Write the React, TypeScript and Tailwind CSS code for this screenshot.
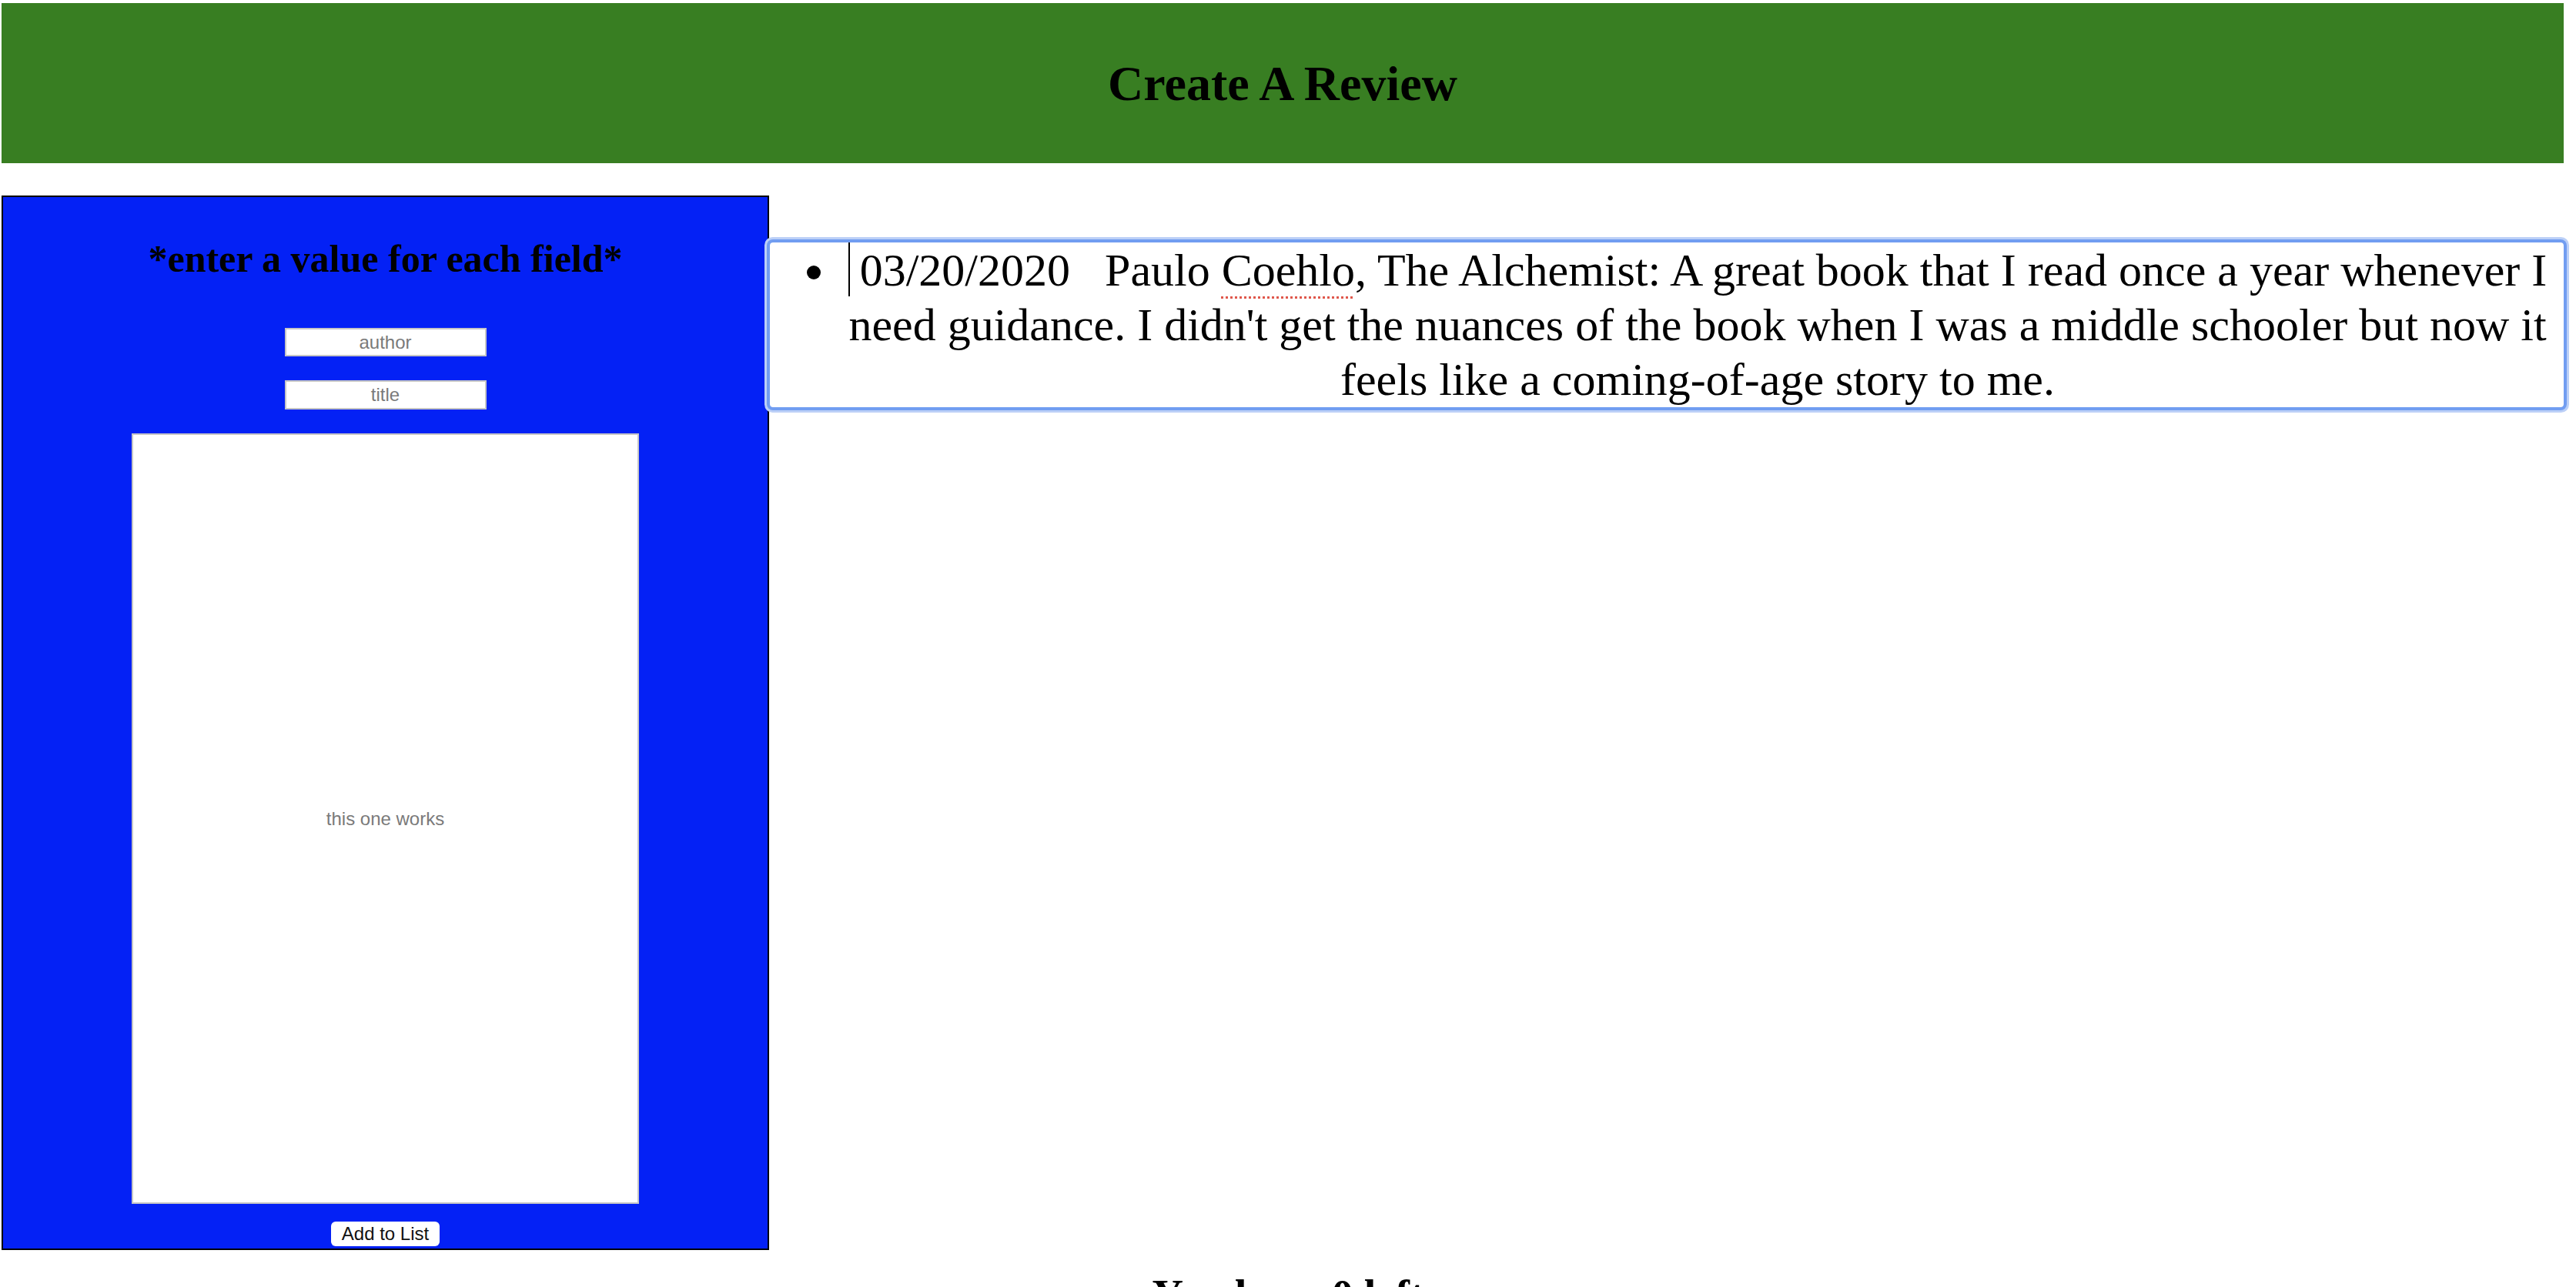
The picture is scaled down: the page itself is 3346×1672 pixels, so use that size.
import React from 'react';

const serif = "font-['Liberation_Serif','Times_New_Roman',serif]";
const sans = "font-['Liberation_Sans',Arial,sans-serif]";

const App = () => {
  return (
    <div className={`min-h-screen bg-white text-black ${serif}`}>
      <header className="ml-[2px] mt-[4px] w-[3328px] h-[208px] bg-[#387e22] flex items-center justify-center">
        <h1 className="text-[64px] leading-[71px] font-bold">Create A Review</h1>
      </header>

      <div className="ml-[2px] w-[3328px] mt-[42px] flex items-start">
        <form
          onSubmit={(e) => e.preventDefault()}
          className="w-[997px] h-[1370px] shrink-0 border-2 border-black bg-[#0421f5] flex flex-col items-center"
        >
          <h2 className="mt-[54px] text-[50px] leading-[53px] font-bold">*enter a value for each field*</h2>
          <input
            placeholder="author"
            className={`mt-[63px] w-[262px] h-[37px] bg-white border-2 border-[#c6c6c6] text-center text-[24px] placeholder:text-[#7a7a7a] ${sans}`}
          />
          <input
            placeholder="title"
            className={`mt-[31px] w-[262px] h-[38px] bg-white border-2 border-[#c6c6c6] text-center text-[24px] placeholder:text-[#7a7a7a] ${sans}`}
          />
          <input
            placeholder="this one works"
            className={`mt-[31px] w-[659px] h-[1001px] bg-white border-2 border-[#c6c6c6] text-center text-[24px] placeholder:text-[#7a7a7a] ${sans}`}
          />
          <button
            type="submit"
            className={`mt-[23px] w-[141px] h-[32px] bg-white rounded-[6px] text-[24px] leading-[28px] text-[#111] ${sans}`}
          >
            Add to List
          </button>
        </form>

        <ul className="ml-[1px] mt-[61px] flex-1 list-disc pl-[90px] pr-[10px] rounded-[4px] shadow-[0_0_0_4px_#719df1,0_0_0_7px_#bcd0f7] text-[60px] leading-[71px] text-center">
          <li>
            <span className="inline-block w-[2px] h-[70px] bg-black align-[-14px] mr-[13px]"></span>
            03/20/2020{'\u00a0\u00a0'} Paulo{' '}
            <span className="underline decoration-dotted decoration-[#e0584c] decoration-[3px] underline-offset-[14px]">Coehlo</span>
            , The Alchemist: A great book that I read once a year whenever I need guidance. I didn't get the nuances of
            the book when I was a middle schooler but now it feels like a coming-of-age story to me.
          </li>
        </ul>
      </div>

      <h2 className="mt-[28px] text-center text-[56px] leading-[62px] font-bold">You have 0 left</h2>
    </div>
  );
};

export default App;
